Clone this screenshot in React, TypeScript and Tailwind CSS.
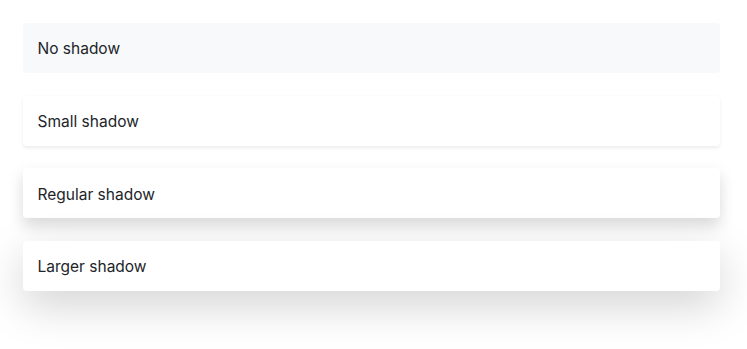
export default function App() {
  const base =
    "w-[697px] h-[50px] rounded-[4px] pl-[14.5px] pr-[14.5px] pt-[2px] flex items-center text-[15.5px] text-[#212529] mb-[22.6px]";
  return (
    <div className="bg-white w-[747px] h-[349px] pt-[23px] pl-[23px]" style={{ fontFamily: "Inter, 'Open Sans', sans-serif" }}>
      <div className={`${base} bg-[#f8f9fa]`}>No shadow</div>
      <div className={`${base} bg-white shadow-[0_1.8px_3.6px_rgba(0,0,0,0.075)]`}>Small shadow</div>
      <div className={`${base} bg-white shadow-[0_7.2px_14.4px_rgba(0,0,0,0.15)]`}>Regular shadow</div>
      <div className={`${base} bg-white shadow-[0_14.4px_43.2px_rgba(0,0,0,0.175)]`}>Larger shadow</div>
    </div>
  );
}
